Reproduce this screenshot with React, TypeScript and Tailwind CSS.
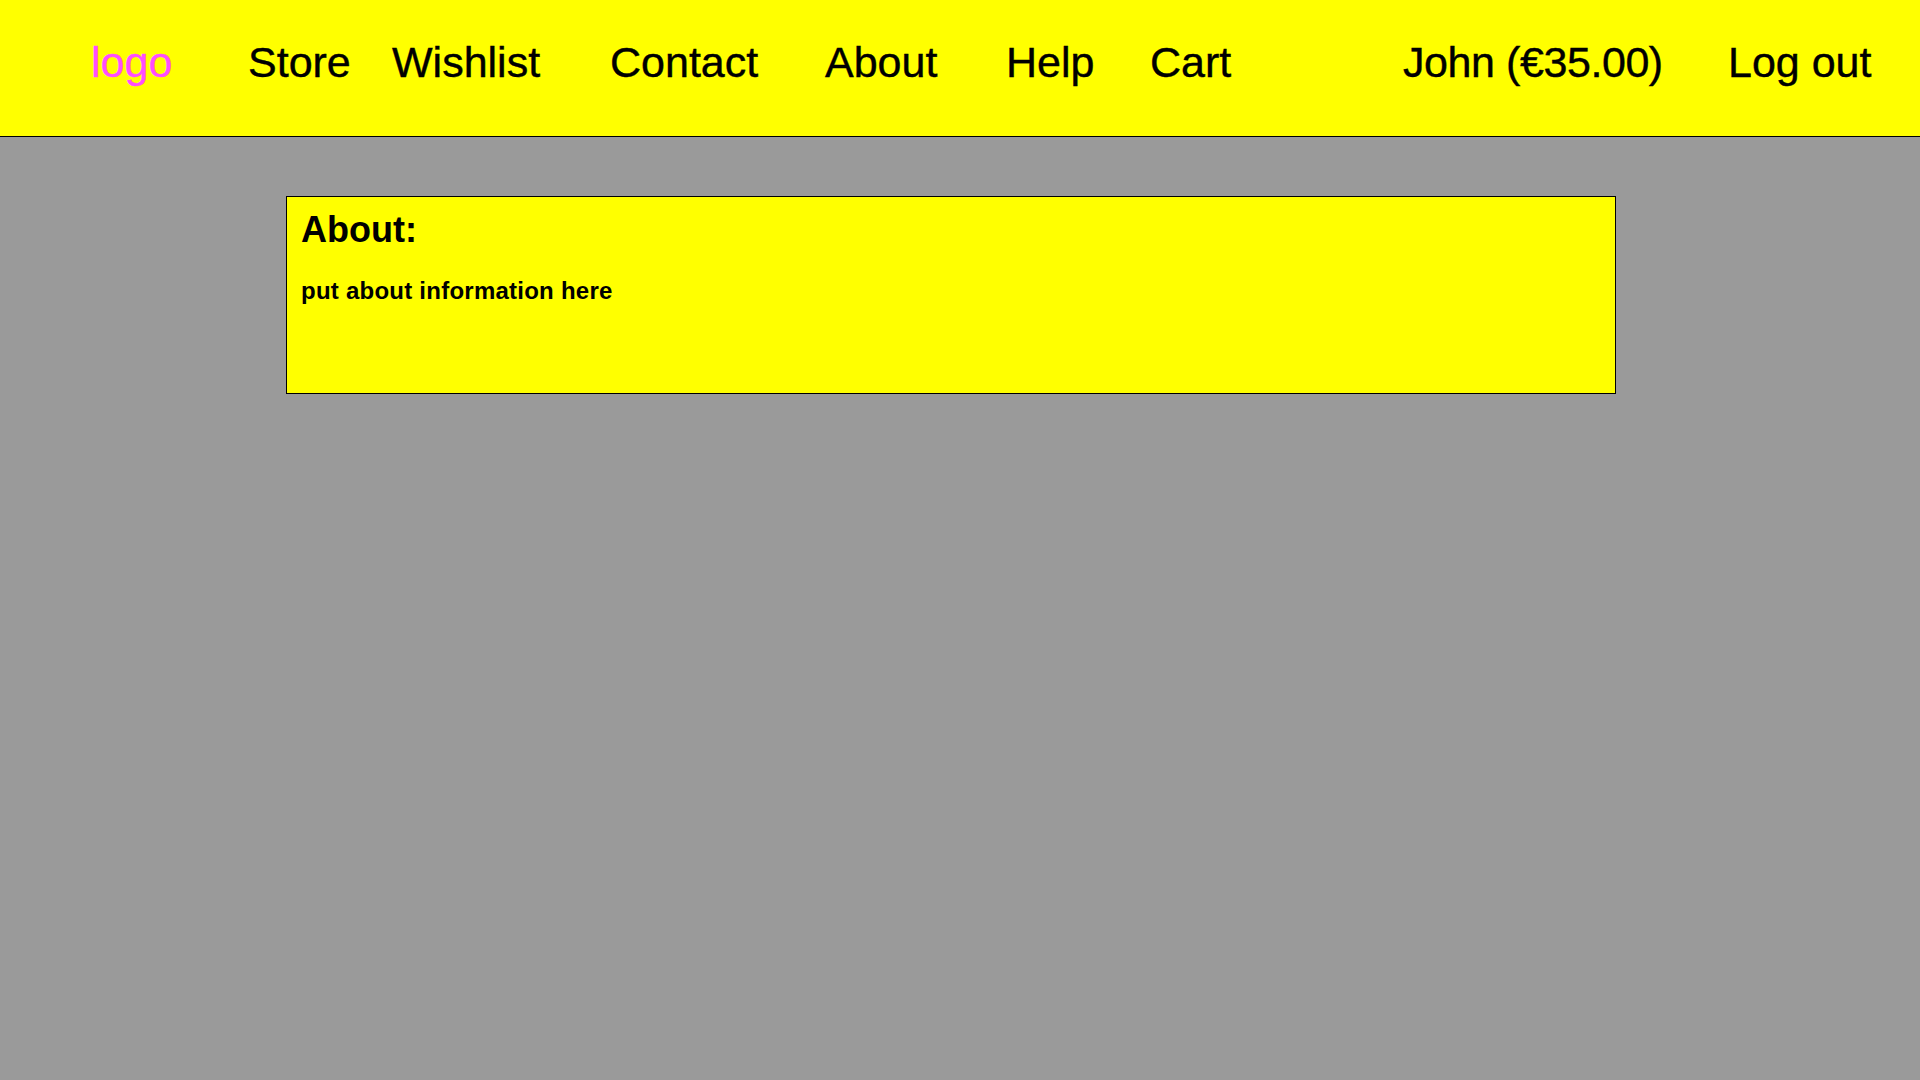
const links = [
  { label: 'Store', w: 'w-[144px]' },
  { label: 'Wishlist', w: 'w-[218px]' },
  { label: 'Contact', w: 'w-[215px]' },
  { label: 'About', w: 'w-[181px]' },
  { label: 'Help', w: 'w-[144px]' },
  { label: 'Cart', w: 'w-[253px]' },
]

export default function App() {
  return (
    <div className="min-h-[1080px] bg-[#9a9a9a] font-['Liberation_Sans',Arial,sans-serif] text-black">
      <header className="flex h-[137px] items-center border-b border-black bg-[#ffff00] pb-3 text-[43px] leading-none [-webkit-text-stroke:0.4px_black]">
        <a className="ml-[91px] w-[157px] text-[#ff4dff] [-webkit-text-stroke:0.4px_#ff4dff]" href="#">logo</a>
        {links.map((l) => (
          <a key={l.label} className={l.w} href="#">{l.label}</a>
        ))}
        <a className="w-[325px] tracking-[-0.01em]" href="#">John (€35.00)</a>
        <a href="#">Log out</a>
      </header>
      <main className="pt-[59px]">
        <div className="ml-[286px] h-[198px] w-[1330px] border border-black bg-[#ffff00] px-[14px] pt-[10px]">
          <h1 className="text-[36px] font-bold leading-tight">About:</h1>
          <p className="mt-[24px] text-[24px] font-bold leading-tight tracking-[0.01em]">put about information here</p>
        </div>
      </main>
    </div>
  )
}
